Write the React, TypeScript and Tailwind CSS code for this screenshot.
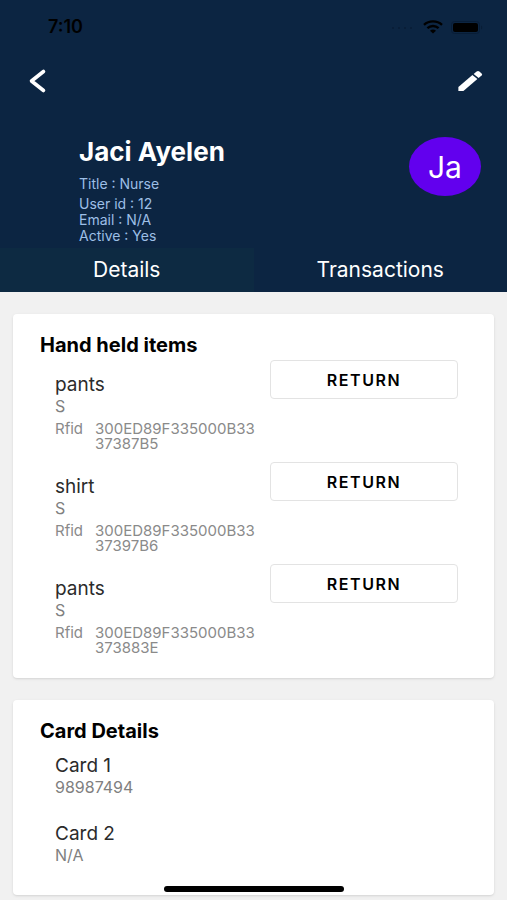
import { useState } from 'react';

interface IHeldItem {
  name: string;
  size: string;
  rfid: string;
}

interface ICard {
  label: string;
  value: string;
}

const items: IHeldItem[] = [
  { name: 'pants', size: 'S', rfid: '300ED89F335000B3337387B5' },
  { name: 'shirt', size: 'S', rfid: '300ED89F335000B3337397B6' },
  { name: 'pants', size: 'S', rfid: '300ED89F335000B33373883E' },
];

const cards: ICard[] = [
  { label: 'Card 1', value: '98987494' },
  { label: 'Card 2', value: 'N/A' },
];

const tabs = ['Details', 'Transactions'];

const StatusBar = () => (
  <div className="flex h-[54px] items-center justify-between pl-12 pr-6 text-black">
    <span className="text-lg leading-5 font-semibold">7:10</span>
    <div className="flex items-center gap-2">
      <svg width="24" height="4" viewBox="0 0 24 4" fill="#081d36">
        <circle cx="2" cy="3" r="1" />
        <circle cx="8" cy="3" r="1" />
        <circle cx="14" cy="3" r="1" />
        <circle cx="20" cy="3" r="1" />
      </svg>
      <svg width="20" height="14" viewBox="0 0 20 14" fill="none" stroke="currentColor" strokeWidth="2.4">
        <path d="M1 4.8C6 0.2 14 0.2 19 4.8" />
        <path d="M4.4 8.2C7.6 5.2 12.4 5.2 15.6 8.2" />
        <path d="M10 13.6L7 10.8C8.8 9.2 11.2 9.2 13 10.8Z" fill="currentColor" stroke="none" />
      </svg>
      <svg width="32" height="13" viewBox="0 0 32 13">
        <rect x="0.5" y="0.5" width="28" height="12" rx="3" fill="none" stroke="#081d36" />
        <rect x="2" y="2" width="25" height="9" rx="2" fill="currentColor" />
        <path d="M30 4.5C31.6 5 31.6 8 30 8.5Z" fill="#081d36" />
      </svg>
    </div>
  </div>
);

const HeldItem = ({ name, size, rfid }: IHeldItem) => (
  <li className="flex h-[102px] items-start">
    <div className="w-[215px] shrink-0 pt-[14px]">
      <p className="text-[19px] leading-[22px] text-[#2b2b2b]">{name}</p>
      <p className="text-base leading-5 text-[#808080]">{size}</p>
      <dl className="mt-[5px] flex text-[15px] leading-[15px] text-[#8a8a8a]">
        <dt className="w-10 shrink-0">Rfid</dt>
        <dd className="flex-1 pr-2 break-all">{rfid}</dd>
      </dl>
    </div>
    <button
      type="button"
      className="h-[39px] flex-1 cursor-pointer rounded border border-[#e3e3e3] text-base leading-5 font-semibold tracking-widest text-black uppercase"
    >
      Return
    </button>
  </li>
);

const App = () => {
  const [activeTab, setActiveTab] = useState('Details');

  return (
    <div className="min-h-screen bg-[#f1f1f1] font-['Inter','Liberation_Sans',sans-serif]">
      <header className="bg-[#0c2542] text-white">
        <StatusBar />
        <div className="flex h-[54px] items-center justify-between pl-7 pr-6">
          <button type="button" aria-label="Back" className="cursor-pointer">
            <svg width="20" height="26" viewBox="0 0 20 26" fill="none" stroke="currentColor" strokeWidth="3.6" strokeLinecap="round" strokeLinejoin="round">
              <path d="M15.5 3.5L3.5 13L15.5 22.5" />
            </svg>
          </button>
          <button type="button" aria-label="Edit" className="cursor-pointer">
            <svg width="26" height="22" viewBox="0 0 26 22" fill="currentColor">
              <path d="M1.4 17L15.4 5L20.4 9L6.4 21H1.4Z" />
              <path d="M16.6 4L19.6 1.5Q21 0.5 22.4 1.5L24.6 3.4Q25.8 4.5 24.6 5.6L21.6 8Z" />
            </svg>
          </button>
        </div>
        <div className="flex items-start justify-between pr-[26px] pl-[79px]">
          <div className="h-[140px] pt-7 text-sm leading-4 text-[#9dbfe6]">
            <h1 className="text-[26px] leading-8 font-bold text-white">Jaci Ayelen</h1>
            <p className="mt-2">Title : Nurse</p>
            <p className="mt-1">User id : 12</p>
            <p>Email : N/A</p>
            <p>Active : Yes</p>
          </div>
          <div className="mt-[29px] flex h-[59px] w-[72px] items-center justify-center rounded-[50%] bg-[#6200ee] text-3xl">
            Ja
          </div>
        </div>
        <div role="tablist" className="flex">
          {tabs.map((tab) => (
            <button
              key={tab}
              type="button"
              role="tab"
              aria-selected={activeTab === tab}
              onClick={() => setActiveTab(tab)}
              className={`h-11 flex-1 cursor-pointer text-[21px] ${activeTab === tab ? 'bg-[#0d2a42]' : ''}`}
            >
              {tab}
            </button>
          ))}
        </div>
      </header>

      <main className="flex flex-col gap-[22px] px-[13px] pt-[22px] pb-[5px]">
        <section className="rounded bg-white pt-[19px] pr-9 pb-3 pl-[27px] shadow">
          <h2 className="text-xl leading-6 font-bold text-black">Hand held items</h2>
          <ul className="mt-[3px] pl-[15px]">
            {items.map((item) => (
              <HeldItem key={item.rfid} {...item} />
            ))}
          </ul>
        </section>
        <section className="rounded bg-white pt-[19px] pr-9 pb-[30px] pl-[27px] shadow">
          <h2 className="text-xl leading-6 font-bold text-black">Card Details</h2>
          <dl className="mt-3 flex flex-col gap-[26px] pl-[15px]">
            {cards.map(({ label, value }) => (
              <div key={label}>
                <dt className="text-[19px] leading-[22px] text-[#2b2b2b]">{label}</dt>
                <dd className="text-base leading-5 text-[#808080]">{value}</dd>
              </div>
            ))}
          </dl>
        </section>
      </main>
      <div className="fixed inset-x-0 bottom-2 mx-auto h-[6px] w-[180px] rounded-full bg-black" />
    </div>
  );
};

export default App;
